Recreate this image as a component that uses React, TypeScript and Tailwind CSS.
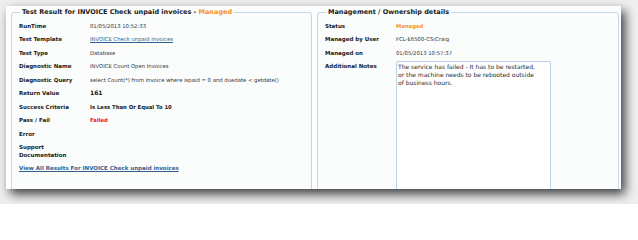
const FONT = "font-['DejaVu_Sans',Verdana,sans-serif]";

type Row = { label: React.ReactNode; value?: React.ReactNode; twoLine?: boolean };

const LEFT_ROWS: Row[] = [
  { label: 'RunTime', value: '01/05/2013 10:52:33' },
  {
    label: 'Test Template',
    value: <span className="text-[#2e5f8e] underline">INVOICE Check unpaid invoices</span>,
  },
  { label: 'Test Type', value: 'Database' },
  { label: 'Diagnostic Name', value: 'INVOICE Count Open Invoices' },
  {
    label: 'Diagnostic Query',
    value: 'select Count(*) from invoice where ispaid = 0 and duedate < getdate()',
  },
  { label: 'Return Value', value: <span className="text-[6px] font-bold text-[#111]">161</span> },
  { label: 'Success Criteria', value: <span className="font-bold text-[#111]">Is Less Than Or Equal To 10</span> },
  { label: 'Pass / Fail', value: <span className="font-bold text-[#e8101a]">Failed</span> },
  { label: 'Error' },
  {
    label: (
      <>
        Support
        <br />
        Documentation
      </>
    ),
    twoLine: true,
  },
];

const RIGHT_ROWS: Row[] = [
  { label: 'Status', value: <span className="font-bold text-[#f7941d]">Managed</span> },
  { label: 'Managed by User', value: 'FCL-E6500-CS\\Craig' },
  { label: 'Managed on', value: '01/05/2013 10:57:37' },
];

// ─── Detail row ──────────────────────────────────────────────────────────────

function DetailRow({ label, value, twoLine }: Row) {
  return (
    <div className={`flex items-center ${twoLine ? 'h-[21px]' : 'h-[13.5px]'}`}>
      <div className="w-[71px] shrink-0 text-[5.5px] leading-[8px] font-bold text-[#1a1a1a]">{label}</div>
      <div className="whitespace-nowrap text-[5.3px] leading-[8px] text-[#333]">{value}</div>
    </div>
  );
}

// ─── Panel ───────────────────────────────────────────────────────────────────

function Panel({
  title,
  width,
  children,
}: {
  title: React.ReactNode;
  width: string;
  children: React.ReactNode;
}) {
  return (
    <fieldset className={`${width} h-[220px] shrink-0 rounded-[3px] border border-[#c3d7ea] bg-[#fbfcfc] pl-[7px]`}>
      <legend className="ml-[1px] px-[2px] text-[6.5px] leading-[8px] font-bold text-[#1a1a1a]">{title}</legend>
      <div className="pt-[3px]">{children}</div>
    </fieldset>
  );
}

export default function App() {
  return (
    <div className={`${FONT} h-[204px] w-[638px] overflow-hidden bg-[#efefef] pt-[6px] pl-[6px]`}>
      <div className="flex h-[183px] w-[615px] gap-[5px] overflow-hidden bg-[#fcfdfd] pt-[2px] pl-[5px] shadow-[4px_5px_10px_rgba(0,0,0,0.75)]">
        <Panel
          width="w-[301px]"
          title={
            <>
              Test Result for INVOICE Check unpaid invoices - <span className="text-[#f7941d]">Managed</span>
            </>
          }
        >
          {LEFT_ROWS.map((r, i) => (
            <DetailRow key={i} {...r} />
          ))}
          <div className="flex h-[13px] items-center">
            <a className="text-[5.5px] leading-[8px] font-bold text-[#2e5f8e] underline">
              View All Results For INVOICE Check unpaid invoices
            </a>
          </div>
        </Panel>

        <Panel width="w-[302px]" title="Management / Ownership details">
          {RIGHT_ROWS.map((r, i) => (
            <DetailRow key={i} {...r} />
          ))}
          <div className="flex pt-[1px]">
            <div className="w-[71px] shrink-0 pt-[1px] text-[5.5px] leading-[8px] font-bold text-[#1a1a1a]">
              Additional Notes
            </div>
            <textarea
              readOnly
              className="h-[140px] w-[155px] resize-none rounded-[2px] border border-[#b9d1e8] bg-white px-[1px] py-[1px] text-[6px] leading-[8.3px] text-[#2a2a2a] outline-none"
              value={
                'The service has failed - It has to be restarted,\nor the machine needs to be rebooted outside\nof business hours.'
              }
            />
          </div>
        </Panel>
      </div>
    </div>
  );
}
